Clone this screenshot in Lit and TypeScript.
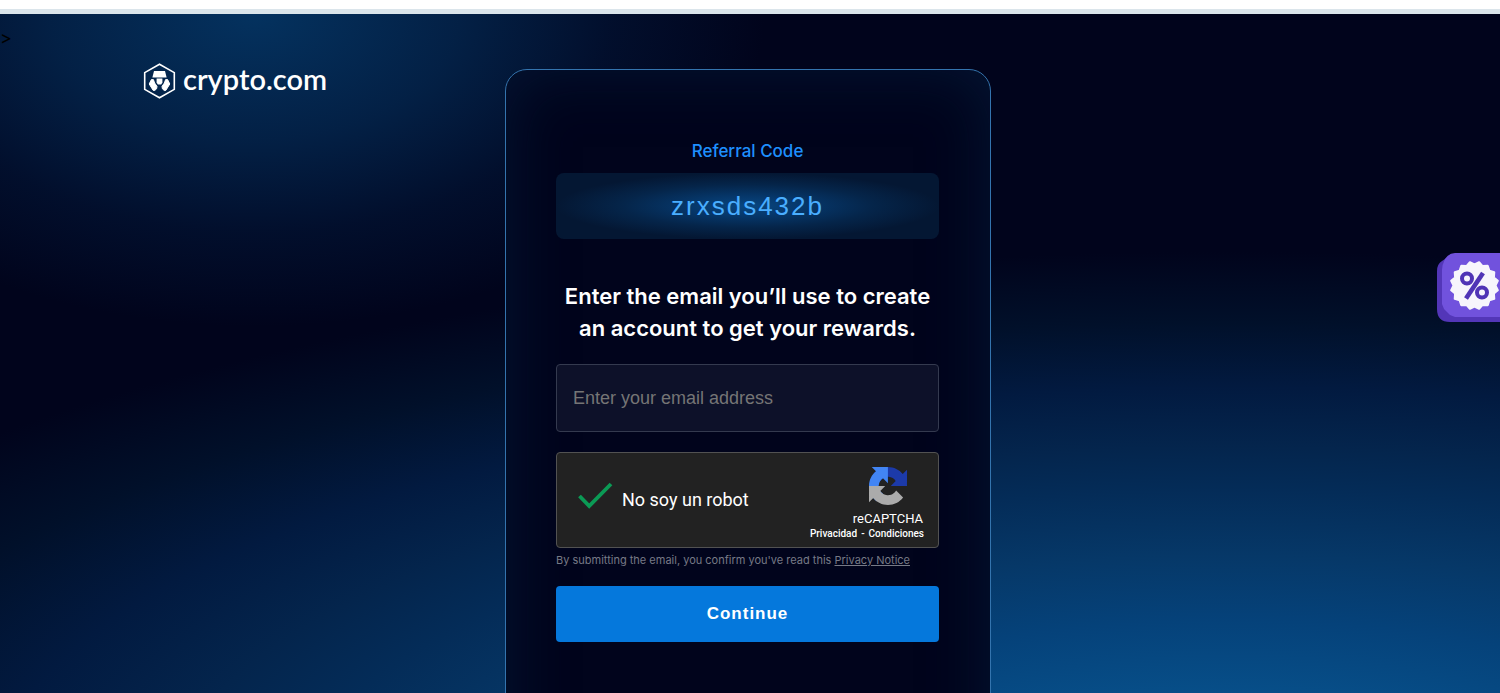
import { LitElement, html, css, svg } from "lit";
import { customElement, property, state } from "lit/decorators.js";

@customElement("brand-logo")
export class BrandLogo extends LitElement {
  static styles = css`
    :host { display: block; }
    .logo { display: inline-flex; align-items: flex-start; gap: 7px; color: #fff; text-decoration: none; }
    .mark { display: block; width: 33px; height: 36px; }
    .word { font: 600 29px/32px Lato, "Open Sans", sans-serif; }
  `;

  render() {
    return html`
      <a class="logo" href="#">
        <svg class="mark" viewBox="0 0 33 36" aria-hidden="true">
          <path d="M16.5 1.2 31.3 9.6v16.8L16.5 34.8 1.7 26.4V9.6z" fill="none" stroke="#fff" stroke-width="1.6" />
          <path d="M11 8h11l1.6 6.4H9.4z" fill="#fff" />
          <path d="M13.6 15.4h5.8v4.2l-1.2 2h-3.4l-1.2-2z" fill="#fff" />
          <g fill="#fff" stroke="#fff" stroke-width="1" stroke-linejoin="round">
            <path d="M8.4 16.6h2l1.2 3.4 2.4 3.4-.4 2.4-1.8 1.6h-1.6L6.2 21z" />
            <path d="M24.6 16.6h-2l-1.2 3.4-2.4 3.4.4 2.4 1.8 1.6h1.6L26.8 21z" />
          </g>
        </svg>
        <span class="word">crypto.com</span>
      </a>
    `;
  }
}

@customElement("robot-check")
export class RobotCheck extends LitElement {
  @property() label = "";
  @state() private checked = true;

  static styles = css`
    :host { display: block; font-family: Roboto, sans-serif; }
    .box { display: flex; justify-content: space-between; height: 94px; border: 1px solid #525252; border-radius: 4px; background: #222; color: #fff; }
    .check { display: flex; align-items: center; gap: 9px; padding-left: 21px; }
    .tick { display: grid; width: 35px; height: 28px; margin-bottom: 8px; }
    .tick > * { grid-area: 1 / 1; width: 100%; height: 100%; margin: 0; }
    .input { appearance: none; }
    .mark { display: block; pointer-events: none; }
    .label { font-size: 18px; line-height: 24px; }
    .brand { display: flex; flex-direction: column; align-items: flex-end; padding: 14px 14px 0 0; }
    .icon { width: 38px; height: 38px; margin-right: 17px; }
    .name { margin: 5px 1px 0 0; font-size: 13px; line-height: 17px; }
    .links { display: flex; gap: 4px; font-weight: 500; font-size: 10px; line-height: 14px; }
    .link { color: inherit; text-decoration: none; }
  `;

  private toggle(e: Event) {
    this.checked = (e.target as HTMLInputElement).checked;
  }

  render() {
    return html`
      <div class="box">
        <div class="check">
          <span class="tick">
            <input class="input" id="robot" type="checkbox" .checked=${this.checked} @change=${this.toggle} />
            <svg class="mark" viewBox="0 0 35 28" aria-hidden="true">
              ${this.checked ? svg`<path d="M1.5 14 11.2 24 33 2" fill="none" stroke="#0b9a55" stroke-width="3.8" />` : null}
            </svg>
          </span>
          <label class="label" for="robot">${this.label}</label>
        </div>
        <div class="brand">
          <svg class="icon" viewBox="0 0 64 64" aria-hidden="true">
            <path fill="#1c3aa9" d="M64 31.955l-.033-1.37V4.687l-7.16 7.16C50.948 4.674 42.033.093 32.05.093c-10.4 0-19.622 4.96-25.458 12.64l11.736 11.86a15.55 15.55 0 0 1 4.754-5.334c2.05-1.6 4.952-2.906 8.968-2.906.485 0 .86.057 1.135.163 4.976.393 9.288 3.14 11.828 7.124l-8.307 8.307L64 31.953" />
            <path fill="#4285f4" d="M31.862.094l-1.37.033H4.594l7.16 7.16C4.58 13.147 0 22.06 0 32.046c0 10.4 4.96 19.622 12.64 25.458L24.5 45.768a15.55 15.55 0 0 1-5.334-4.754c-1.6-2.05-2.906-4.952-2.906-8.968 0-.485.057-.86.163-1.135.393-4.976 3.14-9.288 7.124-11.828l8.307 8.307L31.86.095" />
            <path fill="#ababab" d="M.001 32.045l.033 1.37v25.898l7.16-7.16c5.86 7.173 14.774 11.754 24.76 11.754 10.4 0 19.622-4.96 25.458-12.64l-11.736-11.86a15.55 15.55 0 0 1-4.754 5.334c-2.05 1.6-4.952 2.906-8.968 2.906-.485 0-.86-.057-1.135-.163-4.976-.393-9.288-3.14-11.828-7.124l8.307-8.307c-10.522.04-22.4.066-27.295-.005" />
          </svg>
          <span class="name">reCAPTCHA</span>
          <span class="links">
            <a class="link" href="#">Privacidad</a><span>-</span><a class="link" href="#">Condiciones</a>
          </span>
        </div>
      </div>
    `;
  }
}

@customElement("coupon-tab")
export class CouponTab extends LitElement {
  static styles = css`
    :host { display: block; }
    .tab { display: block; width: 63px; height: 70px; padding: 0; border: 0; background: none; cursor: pointer; }
    .art { display: block; width: 63px; height: 70px; }
  `;

  /** Outline of the scalloped seal: alternating inner and outer points around the centre. */
  private seal(cx: number, cy: number, outer: number, inner: number, teeth: number) {
    const point = (i: number, r: number) => {
      const a = (Math.PI * i) / teeth - Math.PI / 2;
      return `${(cx + r * Math.cos(a)).toFixed(2)} ${(cy + r * Math.sin(a)).toFixed(2)}`;
    };
    let d = `M${point(0, inner)}`;
    for (let i = 0; i < teeth * 2; i += 2) {
      d += `L${point(i + 1, outer)}L${point(i + 2, inner)}`;
    }
    return d + "Z";
  }

  render() {
    return html`
      <button class="tab" aria-label="Coupons">
        <svg class="art" viewBox="0 0 63 70" aria-hidden="true">
          <path d="M8 6 14 1H63V69H13Q0 69 0 56V18Q0 11 5 8z" fill="#5336b8" />
          <path d="M18 0H63V64H18L13 62 7 56 5 51V17Q5 12 8 6 12 0 18 0z" fill="#7152dd" />
          <path d=${this.seal(37.5, 32.5, 23.8, 21, 16)} fill="#f7f5fc" stroke="#f7f5fc" stroke-width="2" stroke-linejoin="round" />
          <g fill="none" stroke="#5034b6">
            <circle cx="30" cy="25.5" r="5" stroke-width="4" />
            <circle cx="45" cy="39.5" r="5" stroke-width="4" />
            <path d="M46 20 29 45.5" stroke-width="4.6" />
          </g>
        </svg>
      </button>
    `;
  }
}

@customElement("app-root")
export class AppRoot extends LitElement {
  static styles = css`
    :host { display: block; font-family: Inter, sans-serif; }
    *, *::before { box-sizing: border-box; }
    .page { display: flex; flex-direction: column; height: 100vh; overflow: hidden; }
    .chrome { flex: none; height: 14px; background: #fff; border-bottom: 5px solid #dbe5eb; }
    .stage {
      position: relative;
      flex: 1;
      min-height: 0;
      display: grid;
      grid-template-columns: 1fr 486px 1fr;
      align-items: start;
      padding-right: 4px;
      background:
        radial-gradient(ellipse 34% 46% at 17% 0%, #04325f 0%, #042b55b8 40%, #03204760 70%, #01041c00 100%),
        radial-gradient(ellipse 110% 80% at 82% 115%, #095a98 0%, #074e88 19%, #05427a 32%, #063868 44%, #042c58 56%, #04254d 64%, #021a40 75%, #01102a 87%, #01041c 100%);
    }
    .side { display: grid; align-content: start; }
    .stray { font: 18px/24px Inter, sans-serif; color: #000; padding: 12px 0 13px 0; }
    .logo { padding-left: 143px; }
    .card {
      margin-top: 55px;
      height: 800px;
      padding: 69px 51px 0 50px;
      border: 1px solid #3474ae;
      border-radius: 22px;
      background: #01041c;
      box-shadow: inset 0 0 64px #041634;
    }
    .form { display: grid; grid-template-columns: minmax(0, 1fr); }
    .caption { margin: 0; text-align: center; font-weight: 500; font-size: 17px; line-height: 24px; color: #1e90ff; }
    .code {
      display: grid;
      place-items: center;
      height: 66px;
      margin-top: 10px;
      border-radius: 8px;
      background: radial-gradient(ellipse 50% 50% at 50% 50%, #084680 0%, #06376a 30%, #05254a 65%, #041733 100%);
      font: 26px/32px "Liberation Sans", Arial, sans-serif;
      letter-spacing: 2px;
      color: #4aaeff;
    }
    .title { margin: 41px 0 20px; text-align: center; font-weight: 600; font-size: 22px; line-height: 32px; color: #fff; }
    .email {
      width: 100%;
      height: 68px;
      padding: 0 16px;
      border: 1px solid #343a4f;
      border-radius: 4px;
      background: #0d1129;
      color: #fff;
      font: 18px/24px "Liberation Sans", Arial, sans-serif;
    }
    .email::placeholder { color: #757575; opacity: 1; }
    .robot { margin-top: 20px; }
    .note { margin: 4px 0 0; font-size: 11px; line-height: 16px; color: #777a86; white-space: nowrap; }
    .link { color: inherit; }
    .submit {
      height: 56px;
      margin-top: 18px;
      border: 0;
      border-radius: 4px;
      background: #0578dc;
      color: #fff;
      font: 700 17px/24px "Liberation Sans", Arial, sans-serif;
      letter-spacing: 1px;
    }
    .coupon { position: absolute; right: 0; top: 239px; }
  `;

  render() {
    return html`
      <div class="page">
        <div class="chrome"></div>
        <main class="stage">
          <div class="side">
            <span class="stray">&gt;</span>
            <brand-logo class="logo"></brand-logo>
          </div>
          <section class="card">
            <form class="form" @submit=${(e: Event) => e.preventDefault()}>
              <p class="caption">Referral Code</p>
              <output class="code">zrxsds432b</output>
              <h1 class="title">Enter the email you’ll use to create<br />an account to get your rewards.</h1>
              <input class="email" type="email" aria-label="Email address" placeholder="Enter your email address" />
              <robot-check class="robot" label="No soy un robot"></robot-check>
              <p class="note">By submitting the email, you confirm you've read this <a class="link" href="#">Privacy Notice</a></p>
              <button class="submit" type="submit">Continue</button>
            </form>
          </section>
          <coupon-tab class="coupon"></coupon-tab>
        </main>
      </div>
    `;
  }
}
